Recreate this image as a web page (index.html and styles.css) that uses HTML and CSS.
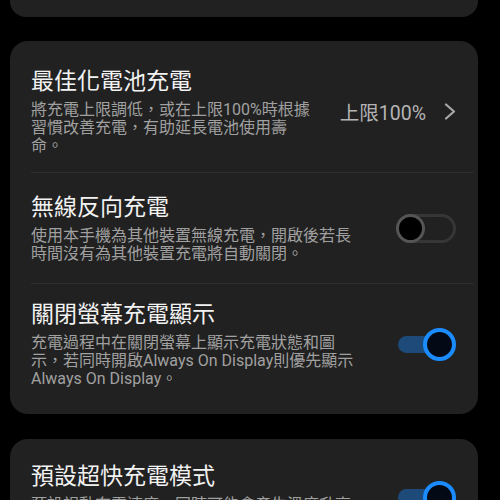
FILE: index.html
```html
<!DOCTYPE html>
<html lang="zh-Hant">
<head>
<meta charset="utf-8">
<link rel="stylesheet" href="styles.css">
</head>
<body>
<div class="card card-top"></div>

<div class="card">
  <div class="row row-first">
    <div class="text">
      <div class="title">最佳化電池充電</div>
      <div class="sub">將充電上限調低，或在上限100%時根據習慣改善充電，有助延長電池使用壽命。</div>
    </div>
    <div class="value">上限100%</div>
    <svg class="chevron" width="12" height="17" viewBox="0 0 12 17"><path d="M2 1.5 L10 8.5 L2 15.5" fill="none" stroke="#a8a8a8" stroke-width="2.2" stroke-linecap="round" stroke-linejoin="round"/></svg>
  </div>
  <div class="divider"></div>
  <div class="row row-second">
    <div class="text">
      <div class="title">無線反向充電</div>
      <div class="sub">使用本手機為其他裝置無線充電，開啟後若長時間沒有為其他裝置充電將自動關閉。</div>
    </div>
    <div class="toggle off"><span class="knob"></span></div>
  </div>
  <div class="divider"></div>
  <div class="row row-last">
    <div class="text">
      <div class="title">關閉螢幕充電顯示</div>
      <div class="sub">充電過程中在關閉螢幕上顯示充電狀態和圖示，若同時開啟Always On Display則優先顯示Always On Display。</div>
    </div>
    <div class="toggle on"><span class="track"></span><span class="knob"></span></div>
  </div>
</div>

<div class="card">
  <div class="row row-third">
    <div class="text">
      <div class="title">預設超快充電模式</div>
      <div class="sub">預設視動充電速度，同時可能會產生溫度升高的情況。</div>
    </div>
    <div class="toggle on"><span class="track"></span><span class="knob"></span></div>
  </div>
</div>
</body>
</html>
```

FILE: styles.css
```css
html, body {
  margin: 0;
  padding: 0;
  background: #000;
  height: 500px;
  overflow: hidden;
}
body {
  font-family: Roboto, "Noto Sans CJK TC", sans-serif;
  color: #f0f0f0;
}
.card {
  background: #212121;
  border-radius: 18px;
  margin: 0 22px 25px 10px;
}
.card-top {
  height: 17px;
  border-radius: 0 0 16px 16px;
  margin-bottom: 24px;
}
.row {
  display: flex;
  align-items: center;
  padding: 21px 22px 22px 21px;
}
.row-first {
  padding-top: 27px;
  padding-bottom: 17px;
}
.row-second {
  padding-bottom: 20px;
}
.row-last {
  padding-top: 17px;
  padding-bottom: 26px;
}
.row-third {
  padding-top: 24px;
}
.text {
  flex: 1;
  min-width: 0;
}
.title {
  font-size: 23px;
  line-height: 28px;
  color: #f2f2f2;
}
.sub {
  font-size: 16px;
  line-height: 18px;
  color: #a0a0a0;
  margin-top: 5px;
  line-break: strict;
}
.value {
  margin-left: 28px;
  font-size: 19.5px;
  color: #b4b4b4;
  white-space: nowrap;
}
.chevron {
  margin-left: 18px;
  display: block;
}
.divider {
  height: 1px;
  background: #2e2e2e;
  margin: 0 4px 0 21px;
}
.toggle {
  position: relative;
  width: 60px;
  height: 29px;
  margin-left: 35px;
  flex: none;
}
.toggle.off {
  box-sizing: border-box;
  border: 3px solid #363636;
  border-radius: 15px;
}
.toggle.off .knob {
  position: absolute;
  left: -3px;
  top: -3px;
  width: 29px;
  height: 29px;
  box-sizing: border-box;
  border: 3.5px solid #555;
  border-radius: 50%;
  background: #000;
}
.toggle.on .track {
  position: absolute;
  left: 2px;
  top: 6px;
  width: 44px;
  height: 17px;
  border-radius: 9px;
  background: #1d4a78;
}
.toggle.on .knob {
  position: absolute;
  right: 0;
  top: -2px;
  width: 33px;
  height: 33px;
  box-sizing: border-box;
  border: 4.5px solid #1a8cff;
  border-radius: 50%;
  background: #040a15;
}
```
